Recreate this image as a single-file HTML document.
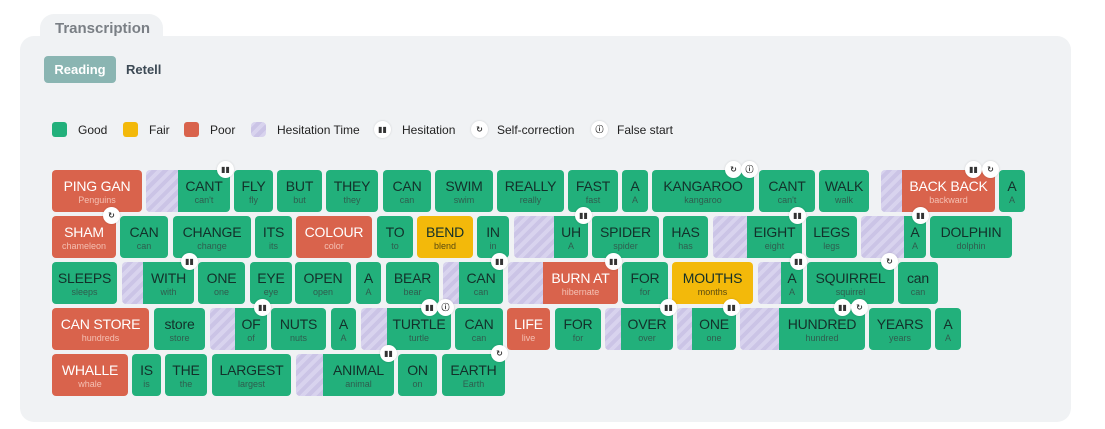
<!DOCTYPE html>
<html><head><meta charset="utf-8">
<style>
*{box-sizing:border-box;margin:0;padding:0}
body{width:1105px;height:429px;background:#fff;font-family:"Liberation Sans",sans-serif;position:relative;overflow:hidden}
.tab{position:absolute;left:40px;top:14px;width:123px;height:30px;background:#f0f2f4;border-radius:14px 14px 0 0;color:#7a7f85;font-size:15px;font-weight:bold;padding:6px 0 0 15px}
.panel{position:absolute;left:20px;top:36px;width:1051px;height:386px;background:#f0f2f4;border-radius:14px}
.rd{position:absolute;left:44px;top:56px;width:72px;height:27px;background:#8ab5b2;border-radius:4px;color:#fff;font-size:13px;font-weight:bold;text-align:center;line-height:28px}
.rt{position:absolute;left:126px;top:56px;line-height:28px;font-size:13px;font-weight:bold;color:#3d4a55}
.sw{position:absolute;top:122px;width:15px;height:15px;border-radius:3px}
.lb{position:absolute;top:123px;font-size:12px;color:#222}
.ic{position:absolute;width:17px;height:17px;border-radius:50%;background:#fff;box-shadow:0 0 2px rgba(0,0,0,.15);font-family:"DejaVu Sans",sans-serif;font-size:8px;line-height:17px;text-align:center;color:#333;font-weight:bold;z-index:3}
.w{position:absolute;height:42px;border-radius:4px;text-align:center;color:#13302a}
.w b{display:block;font-weight:normal;font-size:14px;line-height:15px;padding-top:9px;white-space:nowrap;letter-spacing:-0.2px}
.w i{display:block;font-style:normal;font-size:9px;line-height:13px;color:#2f5d4e;white-space:nowrap}
.g{background:#22b07b}
.r{background:#d9634c;color:#fff}.r i{color:#f4c0b3}
.y{background:#f3b90a}.y i{color:#5a4a10}
.h{position:absolute;height:42px;border-radius:4px 0 0 4px;background:repeating-linear-gradient(135deg,#d8d3ee 0 4px,#cbc4e6 4px 8px)}
.hs{background:repeating-linear-gradient(135deg,#d8d3ee 0 4px,#cbc4e6 4px 8px);border-radius:4px}
.x{border-radius:0 4px 4px 0}
</style></head><body>
<div class="tab">Transcription</div>
<div class="panel"></div>
<div class="rd">Reading</div><div class="rt">Retell</div>

<div class="sw" style="left:52px;background:#22b07b"></div><div class="lb" style="left:78px">Good</div>
<div class="sw" style="left:123px;background:#f3b90a"></div><div class="lb" style="left:149px">Fair</div>
<div class="sw" style="left:184px;background:#d9634c"></div><div class="lb" style="left:210px">Poor</div>
<div class="sw hs" style="left:251px"></div><div class="lb" style="left:277px">Hesitation Time</div>
<div class="ic" style="left:374px;top:121px">▮▮</div><div class="lb" style="left:402px">Hesitation</div>
<div class="ic" style="left:471px;top:121px">↻</div><div class="lb" style="left:497px">Self-correction</div>
<div class="ic" style="left:591px;top:121px">ⓘ</div><div class="lb" style="left:617px">False start</div>

<!-- Row 1 -->
<div class="w r" style="top:170px;left:52px;width:90px"><b>PING GAN</b><i>Penguins</i></div>
<div class="h" style="top:170px;left:146px;width:34px"></div>
<div class="w g x" style="top:170px;left:178px;width:52px"><b>CANT</b><i>can't</i></div>
<div class="w g" style="top:170px;left:234px;width:39px"><b>FLY</b><i>fly</i></div>
<div class="w g" style="top:170px;left:277px;width:45px"><b>BUT</b><i>but</i></div>
<div class="w g" style="top:170px;left:326px;width:52px"><b>THEY</b><i>they</i></div>
<div class="w g" style="top:170px;left:383px;width:48px"><b>CAN</b><i>can</i></div>
<div class="w g" style="top:170px;left:435px;width:58px"><b>SWIM</b><i>swim</i></div>
<div class="w g" style="top:170px;left:497px;width:67px"><b>REALLY</b><i>really</i></div>
<div class="w g" style="top:170px;left:568px;width:50px"><b>FAST</b><i>fast</i></div>
<div class="w g" style="top:170px;left:622px;width:26px"><b>A</b><i>A</i></div>
<div class="w g" style="top:170px;left:652px;width:102px"><b>KANGAROO</b><i>kangaroo</i></div>
<div class="w g" style="top:170px;left:759px;width:56px"><b>CANT</b><i>can't</i></div>
<div class="w g" style="top:170px;left:819px;width:50px"><b>WALK</b><i>walk</i></div>
<div class="h" style="top:170px;left:881px;width:24px"></div>
<div class="w r x" style="top:170px;left:902px;width:93px"><b>BACK BACK</b><i>backward</i></div>
<div class="w g" style="top:170px;left:999px;width:26px"><b>A</b><i>A</i></div>
<div class="ic" style="left:217px;top:161px">▮▮</div>
<div class="ic" style="left:725px;top:161px">↻</div><div class="ic" style="left:741px;top:161px">ⓘ</div>
<div class="ic" style="left:965px;top:161px">▮▮</div><div class="ic" style="left:982px;top:161px">↻</div>

<!-- Row 2 -->
<div class="w r" style="top:216px;left:52px;width:64px"><b>SHAM</b><i>chameleon</i></div>
<div class="w g" style="top:216px;left:120px;width:48px"><b>CAN</b><i>can</i></div>
<div class="w g" style="top:216px;left:173px;width:78px"><b>CHANGE</b><i>change</i></div>
<div class="w g" style="top:216px;left:255px;width:37px"><b>ITS</b><i>its</i></div>
<div class="w r" style="top:216px;left:296px;width:76px"><b>COLOUR</b><i>color</i></div>
<div class="w g" style="top:216px;left:377px;width:36px"><b>TO</b><i>to</i></div>
<div class="w y" style="top:216px;left:417px;width:56px"><b>BEND</b><i>blend</i></div>
<div class="w g" style="top:216px;left:477px;width:32px"><b>IN</b><i>in</i></div>
<div class="h" style="top:216px;left:514px;width:42px"></div>
<div class="w g x" style="top:216px;left:554px;width:34px"><b>UH</b><i>A</i></div>
<div class="w g" style="top:216px;left:592px;width:67px"><b>SPIDER</b><i>spider</i></div>
<div class="w g" style="top:216px;left:663px;width:45px"><b>HAS</b><i>has</i></div>
<div class="h" style="top:216px;left:713px;width:36px"></div>
<div class="w g x" style="top:216px;left:747px;width:55px"><b>EIGHT</b><i>eight</i></div>
<div class="w g" style="top:216px;left:806px;width:51px"><b>LEGS</b><i>legs</i></div>
<div class="h" style="top:216px;left:861px;width:45px"></div>
<div class="w g x" style="top:216px;left:904px;width:22px"><b>A</b><i>A</i></div>
<div class="w g" style="top:216px;left:930px;width:82px"><b>DOLPHIN</b><i>dolphin</i></div>
<div class="ic" style="left:103px;top:207px">↻</div>
<div class="ic" style="left:575px;top:207px">▮▮</div>
<div class="ic" style="left:789px;top:207px">▮▮</div>
<div class="ic" style="left:912px;top:207px">▮▮</div>

<!-- Row 3 -->
<div class="w g" style="top:262px;left:52px;width:65px"><b>SLEEPS</b><i>sleeps</i></div>
<div class="h" style="top:262px;left:122px;width:23px"></div>
<div class="w g x" style="top:262px;left:143px;width:51px"><b>WITH</b><i>with</i></div>
<div class="w g" style="top:262px;left:198px;width:47px"><b>ONE</b><i>one</i></div>
<div class="w g" style="top:262px;left:250px;width:42px"><b>EYE</b><i>eye</i></div>
<div class="w g" style="top:262px;left:295px;width:56px"><b>OPEN</b><i>open</i></div>
<div class="w g" style="top:262px;left:356px;width:25px"><b>A</b><i>A</i></div>
<div class="w g" style="top:262px;left:386px;width:53px"><b>BEAR</b><i>bear</i></div>
<div class="h" style="top:262px;left:443px;width:18px"></div>
<div class="w g x" style="top:262px;left:459px;width:44px"><b>CAN</b><i>can</i></div>
<div class="h" style="top:262px;left:508px;width:37px"></div>
<div class="w r x" style="top:262px;left:543px;width:75px"><b>BURN AT</b><i>hibernate</i></div>
<div class="w g" style="top:262px;left:622px;width:46px"><b>FOR</b><i>for</i></div>
<div class="w y" style="top:262px;left:672px;width:81px"><b>MOUTHS</b><i>months</i></div>
<div class="h" style="top:262px;left:758px;width:25px"></div>
<div class="w g x" style="top:262px;left:781px;width:22px"><b>A</b><i>A</i></div>
<div class="w g" style="top:262px;left:807px;width:87px"><b>SQUIRREL</b><i>squirrel</i></div>
<div class="w g" style="top:262px;left:898px;width:40px"><b>can</b><i>can</i></div>
<div class="ic" style="left:181px;top:253px">▮▮</div>
<div class="ic" style="left:491px;top:253px">▮▮</div>
<div class="ic" style="left:605px;top:253px">▮▮</div>
<div class="ic" style="left:790px;top:253px">▮▮</div>
<div class="ic" style="left:881px;top:253px">↻</div>

<!-- Row 4 -->
<div class="w r" style="top:308px;left:52px;width:97px"><b>CAN STORE</b><i>hundreds</i></div>
<div class="w g" style="top:308px;left:154px;width:51px"><b>store</b><i>store</i></div>
<div class="h" style="top:308px;left:210px;width:27px"></div>
<div class="w g x" style="top:308px;left:235px;width:32px"><b>OF</b><i>of</i></div>
<div class="w g" style="top:308px;left:271px;width:55px"><b>NUTS</b><i>nuts</i></div>
<div class="w g" style="top:308px;left:331px;width:25px"><b>A</b><i>A</i></div>
<div class="h" style="top:308px;left:361px;width:28px"></div>
<div class="w g x" style="top:308px;left:387px;width:64px"><b>TURTLE</b><i>turtle</i></div>
<div class="w g" style="top:308px;left:455px;width:48px"><b>CAN</b><i>can</i></div>
<div class="w r" style="top:308px;left:507px;width:43px"><b>LIFE</b><i>live</i></div>
<div class="w g" style="top:308px;left:555px;width:46px"><b>FOR</b><i>for</i></div>
<div class="h" style="top:308px;left:605px;width:18px"></div>
<div class="w g x" style="top:308px;left:621px;width:52px"><b>OVER</b><i>over</i></div>
<div class="h" style="top:308px;left:677px;width:17px"></div>
<div class="w g x" style="top:308px;left:692px;width:44px"><b>ONE</b><i>one</i></div>
<div class="h" style="top:308px;left:740px;width:41px"></div>
<div class="w g x" style="top:308px;left:779px;width:86px"><b>HUNDRED</b><i>hundred</i></div>
<div class="w g" style="top:308px;left:869px;width:62px"><b>YEARS</b><i>years</i></div>
<div class="w g" style="top:308px;left:935px;width:26px"><b>A</b><i>A</i></div>
<div class="ic" style="left:254px;top:299px">▮▮</div>
<div class="ic" style="left:421px;top:299px">▮▮</div><div class="ic" style="left:437px;top:299px">ⓘ</div>
<div class="ic" style="left:660px;top:299px">▮▮</div>
<div class="ic" style="left:723px;top:299px">▮▮</div>
<div class="ic" style="left:834px;top:299px">▮▮</div><div class="ic" style="left:851px;top:299px">↻</div>

<!-- Row 5 -->
<div class="w r" style="top:354px;left:52px;width:76px"><b>WHALLE</b><i>whale</i></div>
<div class="w g" style="top:354px;left:132px;width:29px"><b>IS</b><i>is</i></div>
<div class="w g" style="top:354px;left:165px;width:42px"><b>THE</b><i>the</i></div>
<div class="w g" style="top:354px;left:212px;width:79px"><b>LARGEST</b><i>largest</i></div>
<div class="h" style="top:354px;left:296px;width:29px"></div>
<div class="w g x" style="top:354px;left:323px;width:71px"><b>ANIMAL</b><i>animal</i></div>
<div class="w g" style="top:354px;left:398px;width:39px"><b>ON</b><i>on</i></div>
<div class="w g" style="top:354px;left:442px;width:63px"><b>EARTH</b><i>Earth</i></div>
<div class="ic" style="left:380px;top:345px">▮▮</div>
<div class="ic" style="left:491px;top:345px">↻</div>
</body></html>
